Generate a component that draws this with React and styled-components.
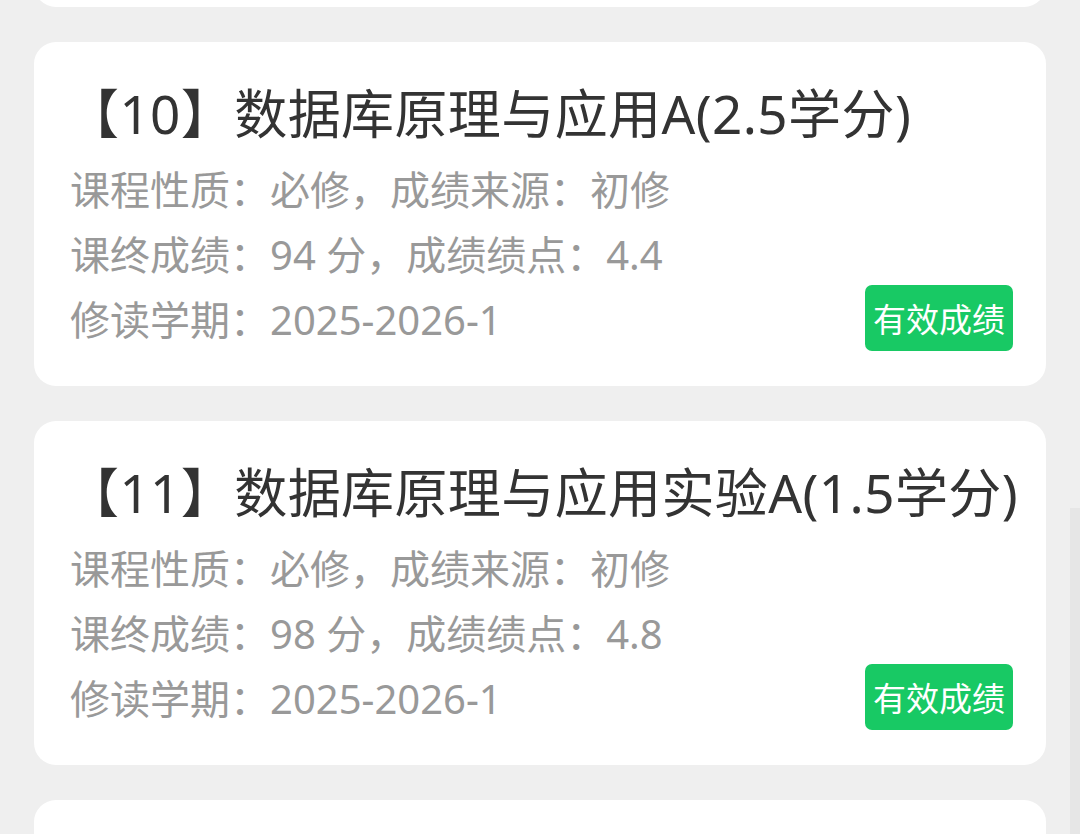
import styled, { createGlobalStyle } from "styled-components";

const GlobalStyle = createGlobalStyle`
  html, body {
    margin: 0;
    padding: 0;
    background: #efefef;
  }
  body {
    font-family: "Noto Sans", "Noto Sans CJK SC", sans-serif;
    overflow: hidden;
  }
`;

const courses = [
  {
    no: 9,
    name: "数据库原理与应用课程设计",
    credit: "1",
    source: "初修",
    score: 92,
    gpa: "4.2",
    term: "2025-2026-1",
  },
  {
    no: 10,
    name: "数据库原理与应用A",
    credit: "2.5",
    source: "初修",
    score: 94,
    gpa: "4.4",
    term: "2025-2026-1",
  },
  {
    no: 11,
    name: "数据库原理与应用实验A",
    credit: "1.5",
    source: "初修",
    score: 98,
    gpa: "4.8",
    term: "2025-2026-1",
  },
  {
    no: 12,
    name: "软件工程导论",
    credit: "2",
    source: "初修",
    score: 90,
    gpa: "4.0",
    term: "2025-2026-1",
  },
];

const List = styled.div`
  display: flex;
  flex-direction: column;
  gap: 35px;
  padding: 0 34px;
  margin-top: -337px;
`;

const Card = styled.div`
  background: #ffffff;
  border-radius: 22px;
  padding: 31px 33px 36px 36px;
  display: flex;
  flex-direction: column;
`;

const Title = styled.div`
  font-size: 53px;
  line-height: 82px;
  letter-spacing: 0.4px;
  color: #333333;
  white-space: nowrap;
  margin-left: -4px;
`;

const Row = styled.div`
  display: flex;
  align-items: center;
  justify-content: space-between;
  height: 65px;
  font-size: 40px;
  color: #999999;
  white-space: nowrap;
`;

const Badge = styled.span`
  display: inline-flex;
  align-items: center;
  justify-content: center;
  height: 66px;
  padding: 0 8px;
  border-radius: 7px;
  background: #18c964;
  color: #ffffff;
  font-size: 33px;
`;

const ScrollTrack = styled.div`
  position: fixed;
  right: 0;
  top: 508px;
  bottom: 0;
  width: 10px;
  background: #e6e6e6;
`;

function CourseCard({ c }) {
  return (
    <Card>
      <Title>
        【{c.no}】{c.name}({c.credit}学分)
      </Title>
      <Row>课程性质：必修，成绩来源：{c.source}</Row>
      <Row>
        课终成绩：{c.score} 分，成绩绩点：{c.gpa}
      </Row>
      <Row>
        <span>修读学期：{c.term}</span>
        <Badge>有效成绩</Badge>
      </Row>
    </Card>
  );
}

export default function App() {
  return (
    <>
      <GlobalStyle />
      <List>
        {courses.map((c) => (
          <CourseCard key={c.no} c={c} />
        ))}
      </List>
      <ScrollTrack />
    </>
  );
}
